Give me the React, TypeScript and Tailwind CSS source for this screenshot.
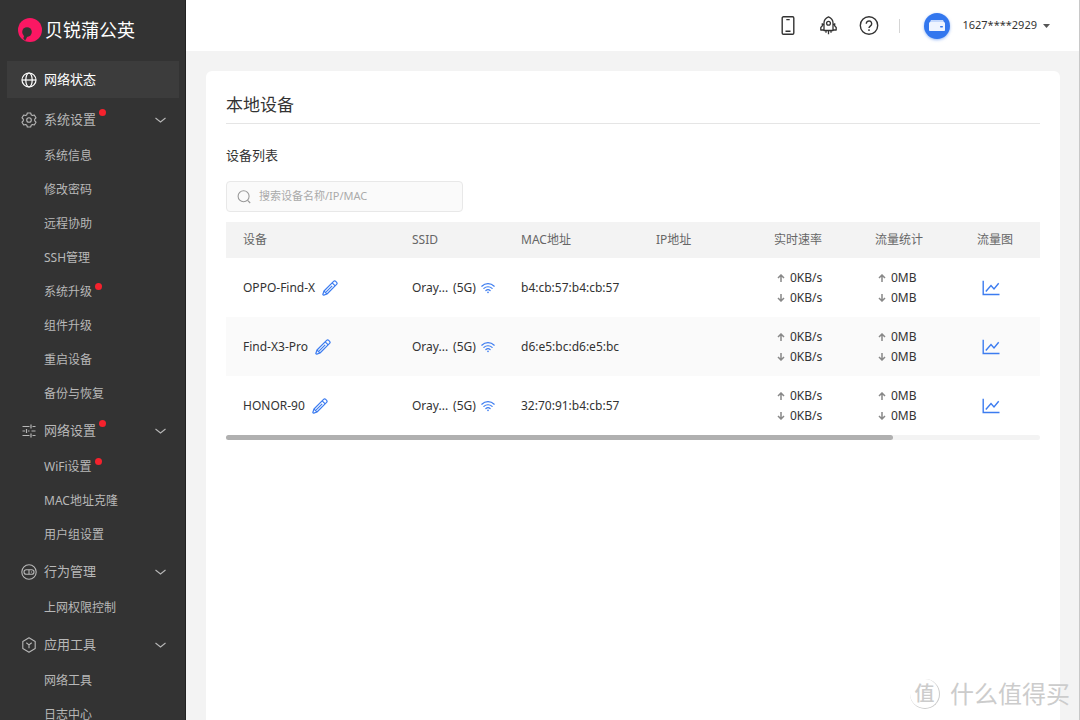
import React from 'react';

type IconProps = { className?: string };

const GlobeIcon = ({ className }: IconProps) => (
  <svg viewBox="0 0 16 16" className={className} fill="none" stroke="currentColor" strokeWidth="1.2">
    <circle cx="8" cy="8" r="7" />
    <ellipse cx="8" cy="8" rx="3.2" ry="7" />
    <path d="M1 8h14" />
  </svg>
);

const GearIcon = ({ className }: IconProps) => (
  <svg viewBox="0 0 16 16" className={className} fill="none" stroke="currentColor" strokeWidth="1.1" strokeLinejoin="round">
    <path d="M6.3 1h3.4l.5 1.8 1.2.7 1.9-.5 1.7 2.8-1.3 1.4v1.6l1.3 1.4-1.7 2.8-1.9-.5-1.2.7-.5 1.8H6.3l-.5-1.8-1.2-.7-1.9.5L1 10.2l1.3-1.4V7.200L1 5.800 2.700 3l1.900.5 1.200-.7z" />
    <circle cx="8" cy="8" r="2.3" />
  </svg>
);

const SlidersIcon = ({ className }: IconProps) => (
  <svg viewBox="0 0 16 16" className={className} fill="none" stroke="currentColor" strokeWidth="1.2">
    <path d="M1.5 3.5h7M11.5 3.5h3M10 1.5v4M1.5 8H4M7 8h1.5M10.5 8h4M5.500 6v4M1.500 12.500h7M11.500 12.500h3M10 10.500v4" />
  </svg>
);

const BehaviorIcon = ({ className }: IconProps) => (
  <svg viewBox="0 0 16 16" className={className} fill="none" stroke="currentColor" strokeWidth="1.1">
    <circle cx="8" cy="8" r="7.2" />
    <rect x="3" y="5.7" width="10" height="4.6" rx="2.3" />
    <path d="M8 5.7v4.6M10.500 7.500v1" />
  </svg>
);

const HexagonIcon = ({ className }: IconProps) => (
  <svg viewBox="0 0 16 16" className={className} fill="none" stroke="currentColor" strokeWidth="1.1" strokeLinejoin="round">
    <path d="M8 .8l6.2 3.6v7.2L8 15.200l-6.200-3.600V4.400z" />
    <path d="M5.3 5.8L8 7.900l2.700-2.100M8 7.900v3.300" />
  </svg>
);

const ChevronIcon = ({ className }: IconProps) => (
  <svg viewBox="0 0 12 12" className={className} fill="none" stroke="currentColor" strokeWidth="1.1">
    <path d="M1.500 4L6.500 8l5-4" />
  </svg>
);

const PhoneIcon = ({ className }: IconProps) => (
  <svg viewBox="0 0 20 20" className={className} fill="none" stroke="currentColor" strokeWidth="1.4">
    <rect x="3.2" y="0.8" width="11.6" height="17.4" rx="1.2" />
    <path d="M7.3 3.600h3.400M6.500 15.300h5" />
  </svg>
);

const RocketIcon = ({ className }: IconProps) => (
  <svg viewBox="0 0 20 20" className={className} fill="none" stroke="currentColor" strokeWidth="1.3" strokeLinejoin="round">
    <path d="M5 14.500V6.700C5 4.200 7 2 9.500.8 12 2 14 4.200 14 6.700v7.800z" />
    <circle cx="9.5" cy="7.3" r="1.9" />
    <path d="M5 8.500H3.300v1.400L1.800 11.500V14H5M14 8.500h1.700v1.400l1.500 1.600V14H14M3.300 7.200v1.300M15.700 7.200v1.300M7 14.500v2.300M9.500 14.500v3.800M12 14.500v2.300" />
  </svg>
);

const HelpIcon = ({ className }: IconProps) => (
  <svg viewBox="0 0 20 20" className={className} fill="none" stroke="currentColor" strokeWidth="1.4">
    <circle cx="10" cy="9.5" r="8.7" />
    <path d="M7.300 7.800a2.700 2.700 0 1 1 4.200 2.100c-1 .8-1.500 1.100-1.500 2.200M10 13.300v1.600" />
  </svg>
);

const SearchIcon = ({ className }: IconProps) => (
  <svg viewBox="0 0 14 14" className={className} fill="none" stroke="currentColor" strokeWidth="1.1">
    <circle cx="6.6" cy="6.3" r="5.5" />
    <path d="M10.6 10.300l2.600 2.700" />
  </svg>
);

const PencilIcon = ({ className }: IconProps) => (
  <svg viewBox="0 0 16 16" className={className} fill="none" stroke="currentColor" strokeWidth="1.2" strokeLinejoin="round">
    <path d="M11.600 1.400a1.500 1.500 0 0 1 2.100 0l.9.9a1.500 1.500 0 0 1 0 2.100L5 14l-3.200 1.100c-.6.200-1.100-.3-.9-.9L2 11z" />
    <path d="M10.200 2.800l3 3M2 11l3 3M4.200 11.800l6-6" />
  </svg>
);

const WifiIcon = ({ className }: IconProps) => (
  <svg viewBox="0 0 14 12" className={className} fill="none" stroke="currentColor" strokeWidth="1.2" strokeLinecap="round">
    <path d="M.8 4.200c3.500-3.400 8.900-3.400 12.400 0M2.900 6.400c2.300-2.200 5.900-2.200 8.200 0M4.900 8.500c1.200-1.100 3-1.100 4.200 0" />
    <circle cx="7" cy="10.4" r=".8" fill="currentColor" stroke="none" />
  </svg>
);

const ChartIcon = ({ className }: IconProps) => (
  <svg viewBox="0 0 18 16" className={className} fill="none" stroke="currentColor" strokeWidth="1.4">
    <path d="M1.200.8v13.700H17.500" />
    <path d="M3.800 11.500L9 5.500l3 3.500 4.700-5.800" />
  </svg>
);

const ArrowIcon = ({ className }: IconProps) => (
  <svg viewBox="0 0 8 8" className={className} fill="none" stroke="currentColor" strokeWidth="1.5">
    <path d="M4 8V1M1 4l3-3 3 3" />
  </svg>
);

const menu = [
  {
    label: '系统设置',
    Icon: GearIcon,
    dot: true,
    items: [
      { label: '系统信息' },
      { label: '修改密码' },
      { label: '远程协助' },
      { label: 'SSH管理' },
      { label: '系统升级', dot: true },
      { label: '组件升级' },
      { label: '重启设备' },
      { label: '备份与恢复' },
    ],
  },
  {
    label: '网络设置',
    Icon: SlidersIcon,
    dot: true,
    items: [{ label: 'WiFi设置', dot: true }, { label: 'MAC地址克隆' }, { label: '用户组设置' }],
  },
  { label: '行为管理', Icon: BehaviorIcon, items: [{ label: '上网权限控制' }] },
  { label: '应用工具', Icon: HexagonIcon, items: [{ label: '网络工具' }, { label: '日志中心' }] },
];

const devices = [
  { name: 'OPPO-Find-X', mac: 'b4:cb:57:b4:cb:57' },
  { name: 'Find-X3-Pro', mac: 'd6:e5:bc:d6:e5:bc' },
  { name: 'HONOR-90', mac: '32:70:91:b4:cb:57' },
];

const Dot = () => <span className="absolute -right-2.5 -top-px size-[7px] rounded-full bg-[#f5222d]" />;

const Sidebar = () => (
  <aside className="w-[186px] shrink-0 overflow-hidden border-r border-[#222] bg-[#333] text-[#b8b8b8]">
    <div className="mb-0.5 flex h-[59px] items-center gap-[3px] pl-[18px] text-white">
      <svg viewBox="0 0 24 24" className="size-6">
        <circle cx="12" cy="12" r="12" fill="#fb1763" />
        <circle cx="9" cy="14" r="4.800" fill="#333" />
        <path d="M6.500 17l-1.200 3.200 1.800 2.600 2.700-5z" fill="#333" />
      </svg>
      <span className="text-lg leading-6">贝锐蒲公英</span>
    </div>
    <nav>
      <a href="#status" className="ml-[7px] mr-1.5 mb-0.5 flex h-[37px] items-center gap-[7px] bg-[#3c3c3c] pl-3.5 text-[13px] text-white">
        <GlobeIcon className="size-4" />
        网络状态
      </a>
      {menu.map(({ label, Icon, dot, items }) => (
        <div key={label}>
          <button type="button" className="flex h-[39px] w-full items-center gap-[7px] pl-[21px] pr-[19px] text-[13px]">
            <Icon className="size-4" />
            <span className="relative">
              {label}
              {dot && <Dot />}
            </span>
            <ChevronIcon className="ml-auto size-3" />
          </button>
          <ul>
            {items.map((item) => (
              <li key={item.label} className="flex h-[34px] items-center pl-11 text-xs">
                <a href={`#${item.label}`} className="relative">
                  {item.label}
                  {'dot' in item && <Dot />}
                </a>
              </li>
            ))}
          </ul>
        </div>
      ))}
    </nav>
  </aside>
);

const TopBar = () => (
  <header className="flex h-[51px] shrink-0 items-center justify-end bg-white pr-[29px] text-[#333]">
    <div className="flex items-center gap-5">
      <button type="button" aria-label="手机"><PhoneIcon className="size-5" /></button>
      <button type="button" aria-label="加速"><RocketIcon className="size-5" /></button>
      <button type="button" aria-label="帮助"><HelpIcon className="size-5" /></button>
      <span className="h-3.5 w-px bg-[#d5d5d5]" />
    </div>
    <button type="button" className="ml-6 flex items-center text-[11px]">
      <span className="mr-3 flex size-[26px] items-center justify-center rounded-full bg-[#3377ee] shadow-[0_1px_3px_#3377ee80]">
        <svg viewBox="0 0 16 11" className="h-[11px] w-4">
          <path d="M2 0h12l2 4v5.500A1.500 1.500 0 0 1 14.500 11h-13A1.500 1.500 0 0 1 0 9.500V4z" fill="#c5d9fd" />
          <rect y="2" width="16" height="9" rx="1.5" fill="#eef4ff" />
          <rect x="11" y="6" width="3" height="1.5" rx=".7" fill="#3377ee" />
        </svg>
      </span>
      1627****2929
      <svg viewBox="0 0 7 4" className="ml-1.5 h-1 w-[7px]"><path d="M0 0h7L3.500 4z" fill="#555" /></svg>
    </button>
  </header>
);

const UpDown = ({ value }: { value: string }) => (
  <div className="pl-[3px] leading-5">
    <div className="flex items-center gap-[5px]"><ArrowIcon className="size-2 text-[#888]" />{value}</div>
    <div className="flex items-center gap-[5px]"><ArrowIcon className="size-2 rotate-180 text-[#888]" />{value}</div>
  </div>
);

const DeviceTable = () => (
  <div className="mt-2.5">
    <table className="w-full table-fixed text-left text-xs">
      <colgroup>
        <col className="w-[169px]" />
        <col className="w-[109px]" />
        <col className="w-[135px]" />
        <col className="w-[118px]" />
        <col className="w-[101px]" />
        <col className="w-[102px]" />
        <col className="w-[80px]" />
      </colgroup>
      <thead>
        <tr className="h-9 bg-[#f3f3f3] text-[#666]">
          {['设备', 'SSID', 'MAC地址', 'IP地址', '实时速率', '流量统计', '流量图'].map((h) => (
            <th key={h} className="whitespace-nowrap pl-[17px] font-normal">{h}</th>
          ))}
        </tr>
      </thead>
      <tbody className="text-[#333]">
        {devices.map((d) => (
          <tr key={d.name} className="h-[59px] even:bg-[#fafafa]">
            <td className="pl-[17px]">
              <div className="flex items-center gap-[7px]">
                {d.name}
                <button type="button" aria-label="修改名称" className="text-[#3c7cf0]"><PencilIcon className="size-4" /></button>
              </div>
            </td>
            <td className="whitespace-nowrap pl-[17px]">
              <div className="flex items-center gap-[5px]">
                <span>Oray...</span>
                <span>(5G)</span>
                <WifiIcon className="h-3 w-3.5 shrink-0 text-[#3c7cf0]" />
              </div>
            </td>
            <td className="pl-[17px]">{d.mac}</td>
            <td className="pl-[17px]" />
            <td className="pl-[17px]"><UpDown value="0KB/s" /></td>
            <td className="pl-[17px]"><UpDown value="0MB" /></td>
            <td className="pl-[22px]">
              <button type="button" aria-label="流量图" className="block text-[#3c7cf0]"><ChartIcon className="h-4 w-[18px]" /></button>
            </td>
          </tr>
        ))}
      </tbody>
    </table>
    <div className="h-[5px] rounded-full bg-[#f3f3f3]">
      <div className="h-full w-[82%] rounded-full bg-[#b0b0b0]" />
    </div>
  </div>
);

const Watermark = () => (
  <div className="pointer-events-none absolute bottom-2 right-2.5 flex items-center gap-2.5 text-[#ccc]">
    <span className="flex size-[30px] items-center justify-center rounded-full border-b border-r border-[#ccc] text-xl font-medium">值</span>
    <span className="text-2xl leading-9">什么值得买</span>
  </div>
);

export default function App() {
  return (
    <div className="relative flex h-screen overflow-hidden bg-[#f3f3f3] font-['Noto_Sans','Noto_Sans_CJK_SC',sans-serif]">
      <Sidebar />
      <div className="flex min-w-0 flex-1 flex-col border-r border-[#c8c8c8]">
        <TopBar />
        <main className="ml-5 mr-[19px] mt-5 flex-1 rounded-t-md bg-white px-5 pt-5 text-[#333]">
          <h1 className="border-b border-[#e5e5e5] pb-1 text-[17px] leading-7">本地设备</h1>
          <h2 className="mt-[19px] text-[13px] leading-6">设备列表</h2>
          <label className="mt-3.5 flex h-[31px] w-[237px] items-center gap-2 rounded-sm border border-[#e8e8e8] bg-[#fafafa] pl-2.5 text-[#999]">
            <SearchIcon className="size-3.5" />
            <input
              type="text"
              aria-label="搜索设备"
              placeholder="搜索设备名称/IP/MAC"
              className="min-w-0 flex-1 bg-transparent text-[11px] outline-none placeholder:text-[#aaa]"
            />
          </label>
          <DeviceTable />
        </main>
      </div>
      <Watermark />
    </div>
  );
}
